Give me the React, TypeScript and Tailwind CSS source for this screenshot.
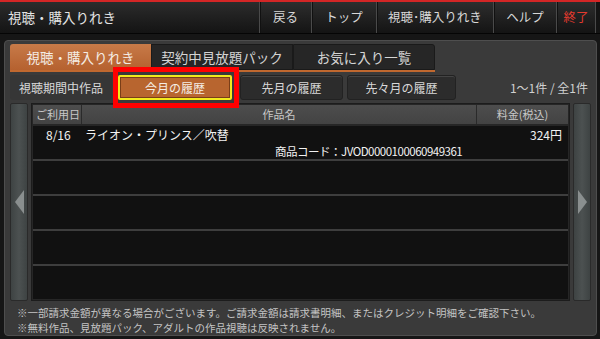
import React from "react";

const font = { fontFamily: '"Noto Sans CJK JP", "Noto Sans", sans-serif' };

function NavBtn({ label, w, red }: { label: string; w: string; red?: boolean }) {
  return (
    <div
      className={`${w} h-full flex items-center justify-center border-l border-[#4a4a4a] shadow-[inset_1px_0_0_#111] bg-gradient-to-b from-[#2e2e2e] to-[#141414] text-[12.5px] whitespace-nowrap ${
        red ? "text-[#e33a2e]" : "text-[#d8d8d8]"
      }`}
    >
      {label}
    </div>
  );
}

function Arrow({ dir }: { dir: "l" | "r" }) {
  return (
    <div className="w-[18px] h-full bg-gradient-to-r from-[#3e4343] via-[#4c5151] to-[#3e4343] border border-[#2a2a2a] rounded-[2px] flex items-center justify-center">
      <svg width="11" height="24" viewBox="0 0 11 24">
        {dir === "l" ? (
          <polygon points="10,0 10,24 1,12" fill="#8a8f8f" />
        ) : (
          <polygon points="1,0 1,24 10,12" fill="#8a8f8f" />
        )}
      </svg>
    </div>
  );
}

export default function App() {
  const rows = [0, 1, 2, 3, 4];
  return (
    <div className="w-[600px] h-[339px] bg-[#161616] flex flex-col overflow-hidden relative" style={font}>
      <div className="h-[2px] bg-[#d42626]" />
      <div className="h-[32px] flex items-stretch bg-gradient-to-b from-[#2c2c2c] to-[#141414] border-b border-[#050505]">
        <div className="flex-1 flex items-center pl-[8px] text-[13.5px] text-[#e4e4e4]">視聴・購入りれき</div>
        <NavBtn label="戻る" w="w-[52px]" />
        <NavBtn label="トップ" w="w-[65px]" />
        <NavBtn label="視聴･購入りれき" w="w-[117px]" />
        <NavBtn label="ヘルプ" w="w-[63px]" />
        <NavBtn label="終了" w="w-[39px]" red />
        <div className="w-[5px] border-l border-[#4a4a4a] bg-[#141414]" />
      </div>

      <div className="ml-[4px] mr-[3px] mt-[6px] h-[296px] rounded-[4px] bg-[#3a3a3a] border border-[#4e4e4e] flex flex-col px-[5px] pt-[3px] relative">
        {/* tabs */}
        <div className="flex h-[26px] w-[425px]">
          <div className="w-[141px] flex items-center justify-center bg-gradient-to-b from-[#c77a48] to-[#b5612f] text-[13.5px] text-[#f4ece4] rounded-tl-[3px]">
            視聴・購入りれき
          </div>
          <div className="w-[142px] flex items-center justify-center bg-[#262626] border border-[#1a1a1a] text-[13.5px] text-[#d4d4d4]">
            契約中見放題パック
          </div>
          <div className="w-[142px] flex items-center justify-center bg-[#262626] border border-[#1a1a1a] text-[13.5px] text-[#d4d4d4] rounded-tr-[3px]">
            お気に入り一覧
          </div>
        </div>
        <div className="h-[2px] w-[425px] bg-[#c0682f]" />

        {/* sub row */}
        <div className="flex items-center h-[25px] mt-[3px] text-[12px]">
          <div className="w-[102px] h-full flex items-center justify-center bg-[#363636] rounded-[3px] text-[#d8d8d8]">
            視聴期間中作品
          </div>
          <div className="ml-[6px] w-[114px] h-[25px] flex items-center justify-center bg-[#b8652f] border-2 border-[#f2ea1c] rounded-[2px] text-[#f5eee6] shadow-[inset_0_0_0_1px_#7a3e18]">
            今月の履歴
          </div>
          <div className="ml-[8px] w-[103px] h-full flex items-center justify-center bg-[#2c2c2c] border border-[#222] rounded-[3px] text-[#d8d8d8] shadow-[inset_0_1px_0_#444]">
            先月の履歴
          </div>
          <div className="ml-[4px] w-[109px] h-full flex items-center justify-center bg-[#2c2c2c] border border-[#222] rounded-[3px] text-[#d8d8d8] shadow-[inset_0_1px_0_#444]">
            先々月の履歴
          </div>
          <div className="flex-1 text-right pr-[3px] text-[#d0d0d0] text-[12px] whitespace-pre">1〜1件 / 全1件</div>
        </div>

        {/* red highlight */}
        <div className="absolute left-[108px] top-[26px] w-[126px] h-[41px] border-[5px] border-[#ff0000] pointer-events-none z-10" />

        {/* table area */}
        <div className="flex h-[198px] mt-[3px] gap-[3px]">
          <Arrow dir="l" />
          <div className="flex-1 bg-[#262626] border border-[#1c1c1c] p-[1px] flex flex-col">
            <div className="flex h-[22px] text-[11px] text-[#c8c8c8] bg-gradient-to-b from-[#4d4d4d] to-[#434343] whitespace-nowrap">
              <div className="w-[49px] flex items-center pl-[3px] border-r border-[#2a2a2a]">ご利用日</div>
              <div className="w-[395px] flex items-center justify-center border-r border-[#2a2a2a]">作品名</div>
              <div className="flex-1 flex items-center justify-center">料金(税込)</div>
            </div>
            <div className="flex-1 flex flex-col mt-[2px] gap-[2px] bg-[#3e3e3e]">
              {rows.map((i) => (
                <div key={i} className="h-[33px] bg-[#111111] flex text-[12px] text-[#f2f2f2] leading-[16px] whitespace-nowrap">
                  {i === 0 && (
                    <>
                      <div className="w-[49px] pl-[13px] pt-[1px]">8/16</div>
                      <div className="w-[395px] flex flex-col pt-[1px]">
                        <div className="pl-[3px]">ライオン・プリンス／吹替</div>
                        <div className="pl-[193px] text-[11.5px] tracking-[-0.5px]">商品コード：JVOD0000100060949361</div>
                      </div>
                      <div className="flex-1 text-right pr-[6px] pt-[1px]">324円</div>
                    </>
                  )}
                </div>
              ))}
            </div>
          </div>
          <Arrow dir="r" />
        </div>

        {/* footer */}
        <div className="mt-[4px] pl-[7px] text-[10.5px] leading-[15px] text-[#c4c4c4] whitespace-nowrap">
          <div>※一部請求金額が異なる場合がございます。ご請求金額は請求書明細、またはクレジット明細をご確認下さい。</div>
          <div>※無料作品、見放題パック、アダルトの作品視聴は反映されません。</div>
        </div>
      </div>
    </div>
  );
}
